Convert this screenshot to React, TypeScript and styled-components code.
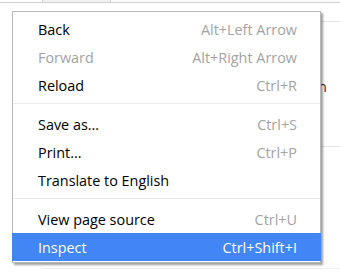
import styled, { createGlobalStyle } from "styled-components";

const GlobalStyle = createGlobalStyle`
  html, body {
    margin: 0;
    padding: 0;
    background: #fff;
  }
  body {
    font-family: "Open Sans", "Noto Sans", "Liberation Sans", sans-serif;
    width: 340px;
    height: 278px;
    overflow: hidden;
  }
`;

// the page behind the menu
const Page = styled.div`
  position: relative;
  width: 340px;
  height: 278px;
  overflow: hidden;
`;

const TopBar = styled.div`
  display: flex;
  height: 2px;
  padding-left: 42px;
  border-bottom: 1px solid #cfcfcf;
`;

const Tab = styled.div<{ $width?: number }>`
  flex: ${(p) => (p.$width ? `0 0 ${p.$width}px` : "1")};
  border-left: 1px solid #d4d4d4;
  background: ${(p) => (p.$width ? "#f1f1f1" : "#fafafa")};
`;

const Content = styled.div`
  margin-left: 130px;
  padding-top: 18px;
`;

const ContentRow = styled.div<{ $height: number }>`
  height: ${(p) => p.$height}px;
  border-top: 1px solid #e6e6e6;
  display: flex;
  justify-content: flex-end;
  align-items: flex-start;
  padding-right: 13px;
  font-size: 15px;
  color: #333;
`;

// only the tail of the page's text peeks out beside the menu
const RowText = styled.span`
  margin-top: 54px;
  line-height: 20px;
`;

const FaintLine = styled.div`
  margin-left: 42px;
  margin-top: 120px;
  border-top: 1px solid #f0f0f0;
`;

// context menu
const Menu = styled.ul`
  position: absolute;
  left: 12px;
  top: 11px;
  width: 307px;
  margin: 0;
  padding: 3px 0 1px;
  list-style: none;
  background: #fff;
  border: 1px solid #b9b9b9;
  box-shadow: 2px 2px 2px rgba(0, 0, 0, 0.38);
  font-size: 14.4px;
`;

const Item = styled.li<{ $disabled?: boolean; $active?: boolean }>`
  display: flex;
  justify-content: space-between;
  align-items: center;
  height: 28px;
  margin: ${(p) => (p.$active ? "0 -1px" : "0")};
  padding-left: ${(p) => (p.$active ? "26px" : "25px")};
  padding-right: ${(p) => (p.$active ? "24px" : "23px")};
  background: ${(p) => (p.$active ? "#4285f4" : "transparent")};
  color: ${(p) => (p.$active ? "#fff" : p.$disabled ? "#a3a3a3" : "#000")};
  white-space: nowrap;
`;

const Shortcut = styled.span<{ $active?: boolean }>`
  color: ${(p) => (p.$active ? "#fff" : "#a3a3a3")};
`;

const Separator = styled.li`
  height: 1px;
  margin: 4px 0 6px;
  background: #e9e9e9;
`;

type Entry =
  | { label: string; shortcut?: string; disabled?: boolean; active?: boolean }
  | "sep";

const entries: Entry[] = [
  { label: "Back", shortcut: "Alt+Left Arrow" },
  { label: "Forward", shortcut: "Alt+Right Arrow", disabled: true },
  { label: "Reload", shortcut: "Ctrl+R" },
  "sep",
  { label: "Save as...", shortcut: "Ctrl+S" },
  { label: "Print...", shortcut: "Ctrl+P" },
  { label: "Translate to English" },
  "sep",
  { label: "View page source", shortcut: "Ctrl+U" },
  { label: "Inspect", shortcut: "Ctrl+Shift+I", active: true },
];

export default function App() {
  return (
    <>
      <GlobalStyle />
      <Page>
        <TopBar>
          <Tab $width={67} />
          <Tab />
        </TopBar>
        <Content>
          <ContentRow $height={124}>
            <RowText>n</RowText>
          </ContentRow>
          <ContentRow $height={1} />
        </Content>
        <FaintLine />

        <Menu>
          {entries.map((e, i) =>
            e === "sep" ? (
              <Separator key={i} />
            ) : (
              <Item key={i} $disabled={e.disabled} $active={e.active}>
                <span>{e.label}</span>
                {e.shortcut && <Shortcut $active={e.active}>{e.shortcut}</Shortcut>}
              </Item>
            )
          )}
        </Menu>
      </Page>
    </>
  );
}
